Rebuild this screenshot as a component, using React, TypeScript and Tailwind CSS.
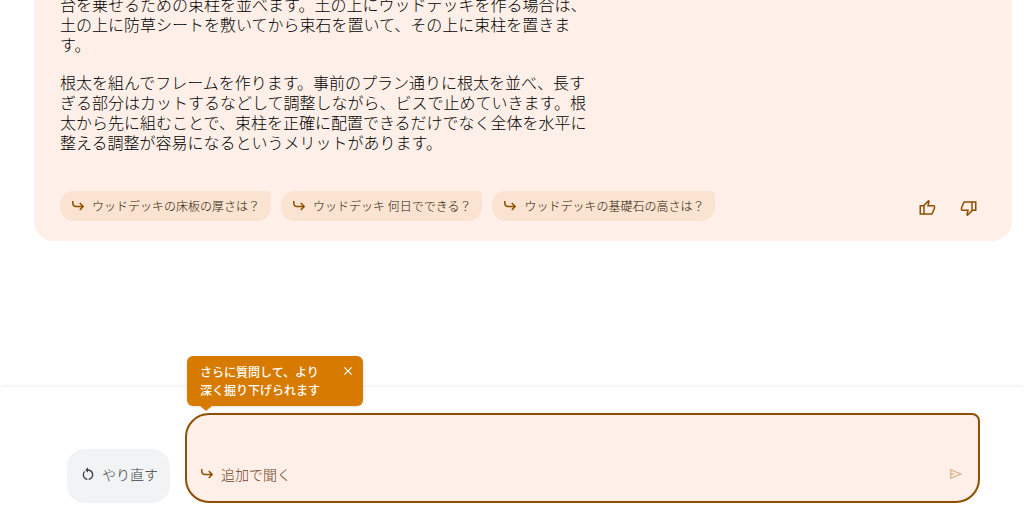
import React, { useState } from "react";
import { MdClose, MdRestartAlt } from "react-icons/md";

const suggestions = [
  "ウッドデッキの床板の厚さは？",
  "ウッドデッキ 何日でできる？",
  "ウッドデッキの基礎石の高さは？",
];

interface IconProps {
  path: string;
  className?: string;
}

const THUMB_UP =
  "M720-120H280v-520l280-280 50 50q7 7 11.5 19t4.5 23v14l-44 174h258q32 0 56 24t24 56v80q0 7-2 15t-4 15L794-168q-9 20-30 34t-44 14Zm-360-80h360l120-280v-80H480l54-220-174 174v406Zm0-406v406-406Zm-80-34v80H160v360h120v80H80v-520h200Z";
const THUMB_DOWN =
  "M240-840h440v520L400-40l-50-50q-7-7-11.5-19t-4.5-23v-14l44-174H120q-32 0-56-24t-24-56v-80q0-7 2-15t4-15l120-282q9-20 30-34t44-14Zm360 80H240L120-480v80h360l-54 220 174-174v-406Zm0 406v-406 406Zm80 34v-80h120v-360H680v-80h200v520H680Z";
const SEND =
  "M120-160v-640l760 320-760 320Zm80-120 474-200-474-200v140l240 60-240 60v140Z";

const SymbolIcon = ({ path, className }: IconProps) => (
  <svg viewBox="0 -960 960 960" fill="currentColor" className={className}>
    <path d={path} />
  </svg>
);

const FollowUpIcon = () => (
  <svg
    viewBox="0 0 12 10"
    fill="none"
    stroke="currentColor"
    strokeWidth="1.5"
    className="h-[10px] w-3 shrink-0 text-[#8f4e00]"
  >
    <path d="M.8 0v2.5a3 3 0 0 0 3 3H11M7.8 2l3.4 3.5L7.8 9" />
  </svg>
);

export default function App() {
  const [question, setQuestion] = useState("");
  const [showTip, setShowTip] = useState(true);

  return (
    <div className="flex min-h-screen flex-col overflow-hidden bg-white font-['Noto_Sans_CJK_JP',sans-serif] font-light">
      <main className="flex-1 pr-3 pl-[34px]">
        <article className="-mt-1.5 rounded-b-[20px] bg-[#fef0e8] px-[26px] pb-5">
          <div className="flex max-w-[530px] flex-col gap-[18px] text-base leading-5 text-black">
            <p>
              台を乗せるための束柱を並べます。土の上にウッドデッキを作る場合は、土の上に防草シートを敷いてから束石を置いて、その上に束柱を置きます。
            </p>
            <p>
              根太を組んでフレームを作ります。事前のプラン通りに根太を並べ、長すぎる部分はカットするなどして調整しながら、ビスで止めていきます。根太から先に組むことで、束柱を正確に配置できるだけでなく全体を水平に整える調整が容易になるというメリットがあります。
            </p>
          </div>

          <div className="mt-[39px] flex items-center justify-between">
            <div className="flex flex-wrap gap-[10px]">
              {suggestions.map((text) => (
                <button
                  key={text}
                  className="flex h-[30px] items-center gap-2 rounded-[14px] rounded-tr-[4px] bg-[#fae3d0] pr-[11px] pl-3 text-xs text-[#1f1300]"
                >
                  <FollowUpIcon />
                  {text}
                </button>
              ))}
            </div>
            <div className="flex gap-6 pt-1 pr-2 text-[#8f4e00]">
              <button aria-label="高く評価">
                <SymbolIcon path={THUMB_UP} className="size-[18px]" />
              </button>
              <button aria-label="低く評価">
                <SymbolIcon path={THUMB_DOWN} className="size-[18px]" />
              </button>
            </div>
          </div>
        </article>
      </main>

      <footer className="flex items-end gap-[15px] bg-white pt-[26px] pr-11 pb-[14px] pl-[67px] shadow-[0_-1px_3px_rgba(0,0,0,0.08)]">
        <button className="flex h-[54px] items-center gap-1.5 rounded-[18px] bg-[#f1f3f4] pr-3 pb-1 pl-[13px] text-sm text-[#3c4043]">
          <MdRestartAlt className="size-4" />
          やり直す
        </button>

        <form
          className="relative flex h-[90px] flex-1 items-end rounded-3xl rounded-tr-lg border-2 border-[#8f4e00] bg-[#fef0e8] px-[14px] pb-[15px]"
          onSubmit={(e) => e.preventDefault()}
        >
          {showTip && (
            <div
              role="tooltip"
              className="absolute bottom-full left-0 mb-[9px] flex h-[50px] w-[176px] items-start justify-between rounded-md bg-[#d67b00] py-[7px] pr-2 pl-[13px] text-xs leading-[18px] font-medium text-white shadow-sm"
            >
              <p>
                さらに質問して、より
                <br />
                深く掘り下げられます
              </p>
              <button
                type="button"
                aria-label="閉じる"
                className="pt-[1px]"
                onClick={() => setShowTip(false)}
              >
                <MdClose className="size-[14px]" />
              </button>
              <span className="absolute top-full left-[13px] border-x-[6px] border-t-[5px] border-x-transparent border-t-[#d67b00]" />
            </div>
          )}
          <div className="flex h-6 w-full items-center gap-2">
            <FollowUpIcon />
            <input
              aria-label="追加で聞く"
              placeholder="追加で聞く"
              value={question}
              onChange={(e) => setQuestion(e.target.value)}
              className="min-w-0 flex-1 bg-transparent text-sm text-[#3a2200] outline-none placeholder:text-[#75431a]"
            />
            <button aria-label="送信" className="text-[#dcb593]">
              <SymbolIcon path={SEND} className="size-4" />
            </button>
          </div>
        </form>
      </footer>
    </div>
  );
}
